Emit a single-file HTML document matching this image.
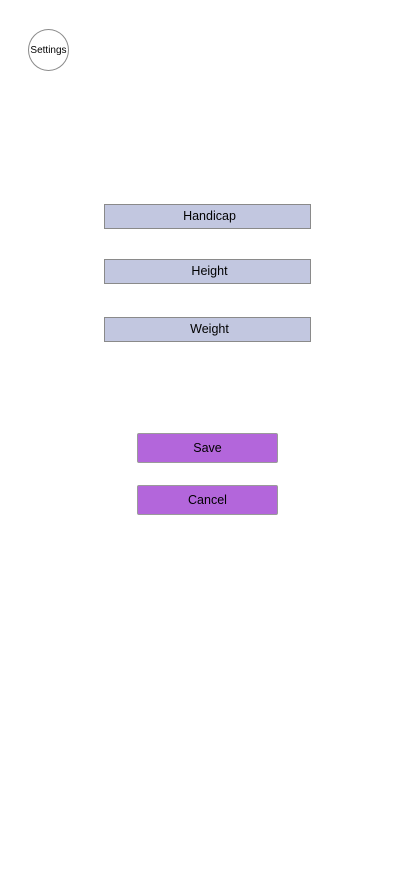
<!DOCTYPE html>
<html><head><style>
body{margin:0;width:414px;height:896px;background:#fff;font-family:"Liberation Sans",sans-serif;position:relative;overflow:hidden}
div{position:absolute;box-sizing:border-box;display:flex;align-items:center;justify-content:center;color:#000}
.f{left:104px;width:207px;height:25px;background:#c2c7e0;border:1px solid #8a8a8a;font-size:12.5px;padding-left:4px;padding-bottom:1px}
.b{left:137px;width:141px;height:30px;background:#b366db;border:1px solid #9a9a9a;border-radius:2px;font-size:12.5px;padding-bottom:1px}
</style></head><body>
<div style="left:28px;top:29px;width:41px;height:42px;border:1px solid #8a8a8a;border-radius:50%;font-size:10px;padding-top:1px">Settings</div>
<div class="f" style="top:204px">Handicap</div>
<div class="f" style="top:259px">Height</div>
<div class="f" style="top:317px">Weight</div>
<div class="b" style="top:433px">Save</div>
<div class="b" style="top:485px">Cancel</div>
</body></html>
